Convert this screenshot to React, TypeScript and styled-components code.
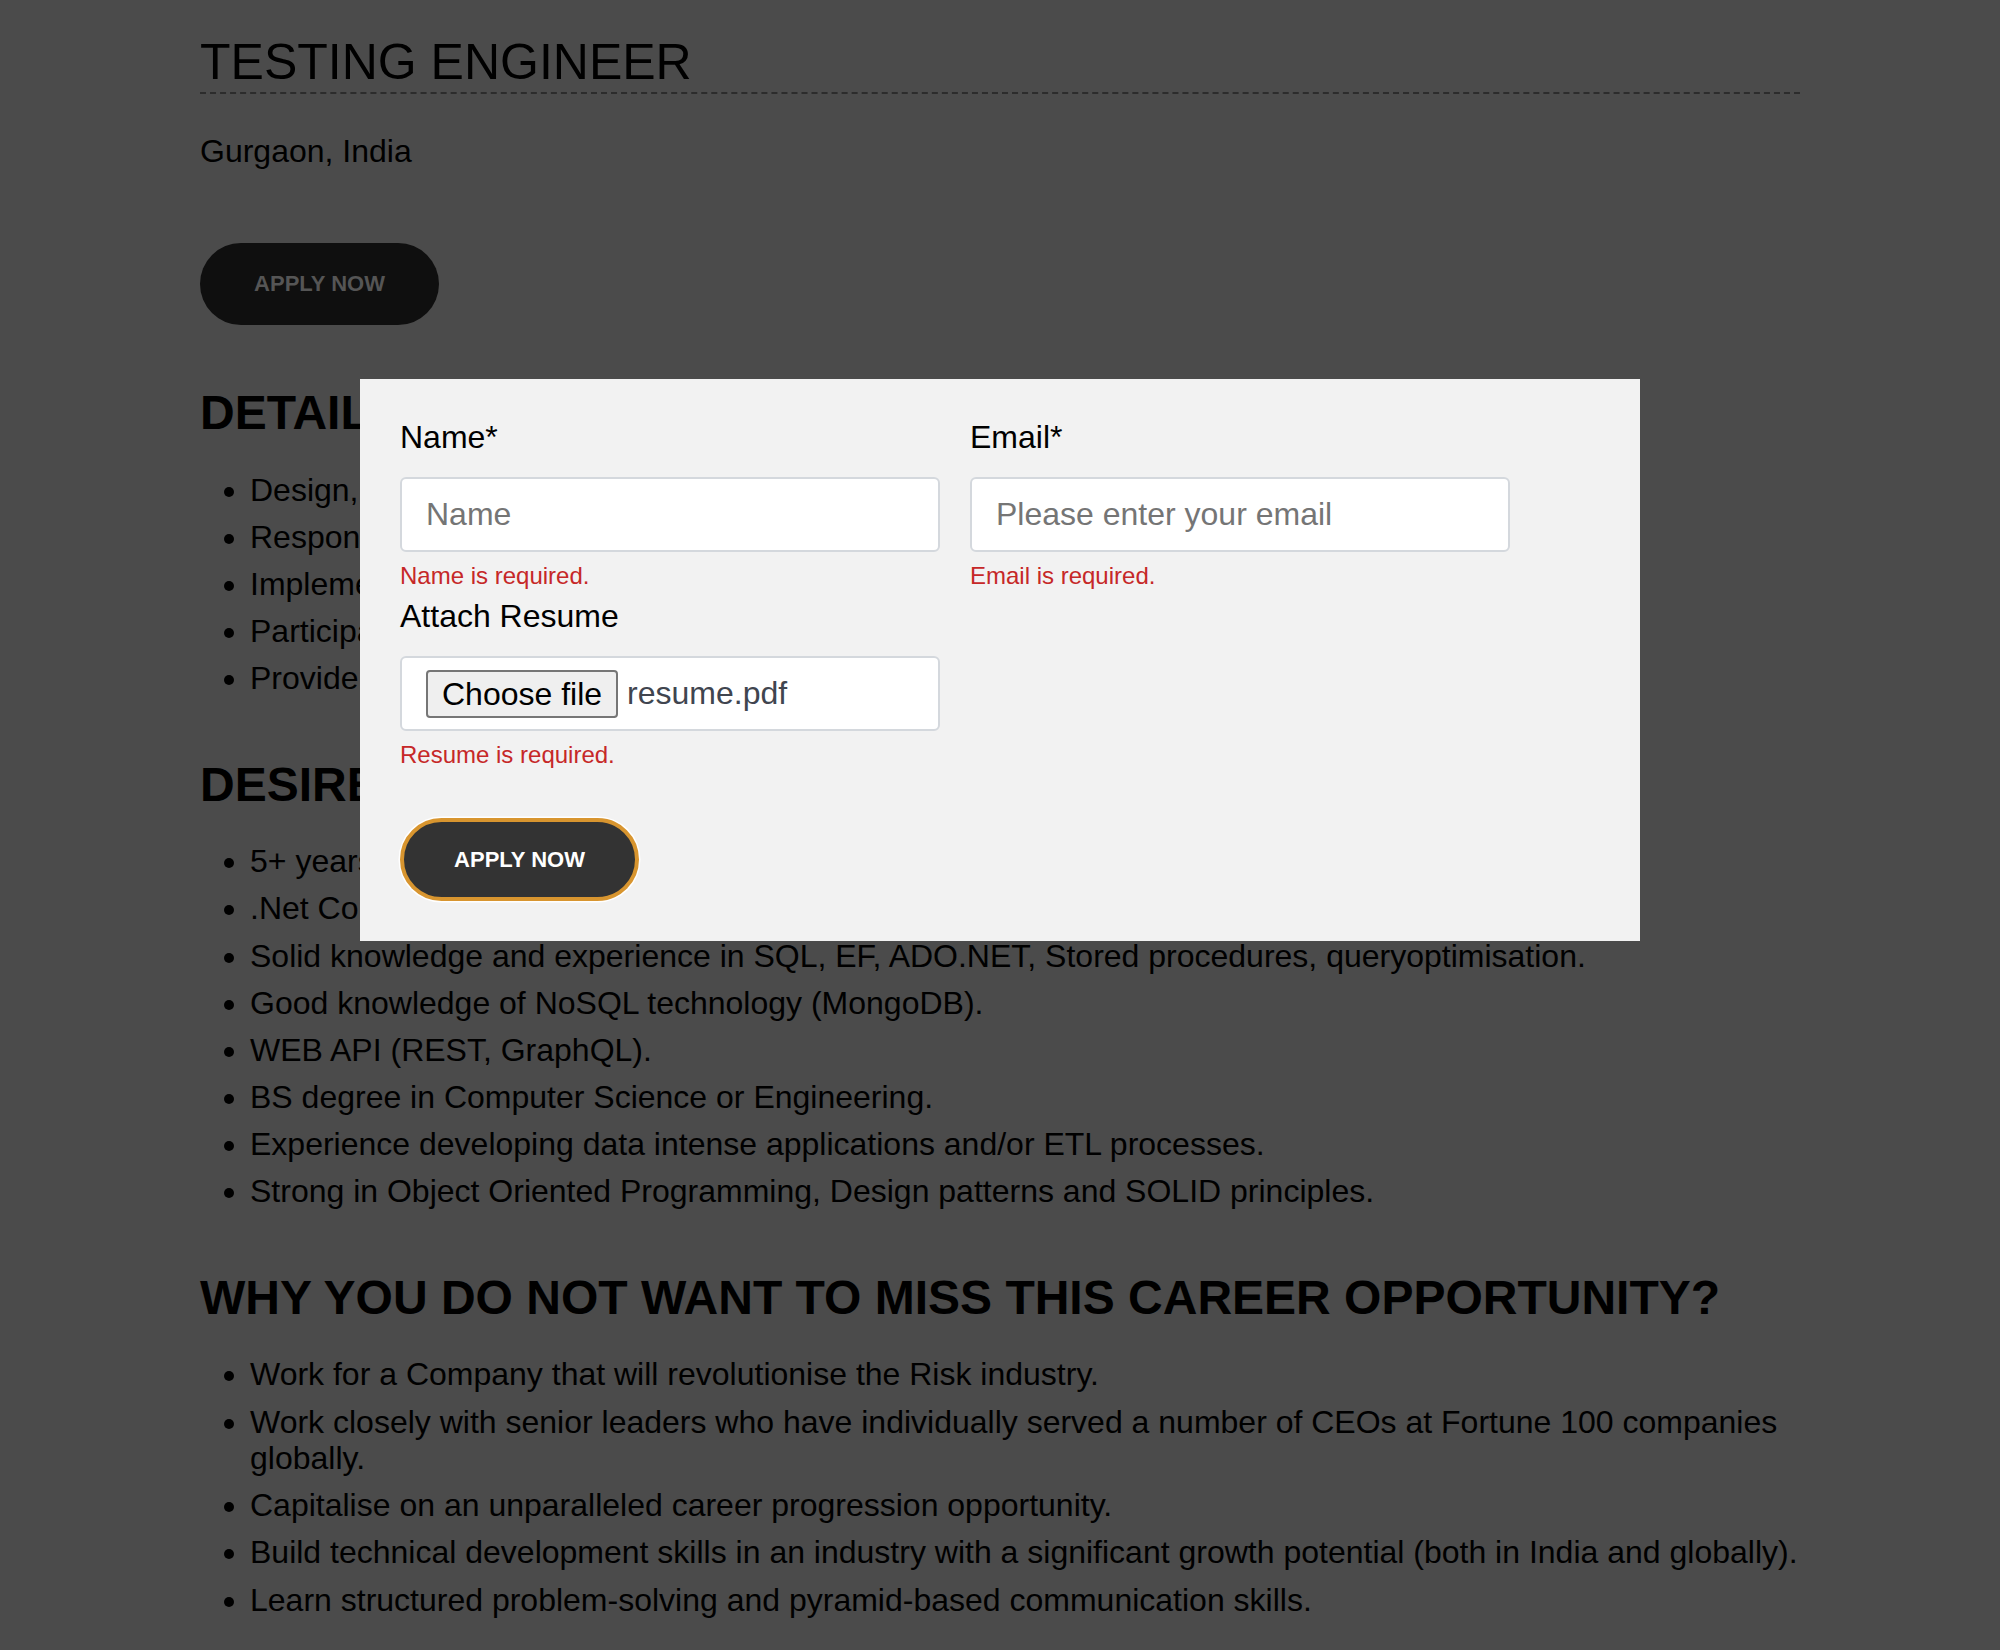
import { createGlobalStyle } from "styled-components";
import styled from "styled-components";

const GlobalStyle = createGlobalStyle`
  html, body {
    margin: 0;
    padding: 0;
    background: #4b4b4b;
  }
  body {
    font-family: "Liberation Sans", Arial, Helvetica, sans-serif;
    color: #000;
  }
  * {
    box-sizing: border-box;
  }
`;

const details = [
  "Design, develop and execute automation scripts using open source tools.",
  "Responsible for identifying, recording and tracking bugs.",
  "Implement test plans and test cases for new features.",
  "Participate in code reviews and sprint planning meetings.",
  "Provide regular reports on testing progress and quality.",
];

const desired = [
  "5+ years of experience in software development and testing.",
  ".Net Core, C#, ASP.NET MVC and Entity Framework.",
  "Solid knowledge and experience in SQL, EF, ADO.NET, Stored procedures, queryoptimisation.",
  "Good knowledge of NoSQL technology (MongoDB).",
  "WEB API (REST, GraphQL).",
  "BS degree in Computer Science or Engineering.",
  "Experience developing data intense applications and/or ETL processes.",
  "Strong in Object Oriented Programming, Design patterns and SOLID principles.",
];

const why = [
  "Work for a Company that will revolutionise the Risk industry.",
  "Work closely with senior leaders who have individually served a number of CEOs at Fortune 100 companies globally.",
  "Capitalise on an unparalleled career progression opportunity.",
  "Build technical development skills in an industry with a significant growth potential (both in India and globally).",
  "Learn structured problem-solving and pyramid-based communication skills.",
];

const Page = styled.div`
  width: 1600px;
  margin: 0 auto;
  padding-top: 32px;
  padding-bottom: 40px;
`;

const JobTitle = styled.h1`
  margin: 0;
  font-size: 50px;
  font-weight: 400;
  line-height: 60px;
  border-bottom: 2px dashed #2c2c2c;
`;

const Location = styled.p`
  margin: 33px 0 0;
  font-size: 32px;
  line-height: 48px;
`;

const ApplyWrap = styled.div`
  margin-top: 68px;
`;

const ApplyButton = styled.button<{ $active?: boolean }>`
  width: 239px;
  height: ${(p) => (p.$active ? "83px" : "82px")};
  border-radius: 42px;
  border: ${(p) => (p.$active ? "4px solid #d8952f" : "none")};
  box-shadow: ${(p) => (p.$active ? "0 0 0 1.5px #ffffff" : "none")};
  background: ${(p) => (p.$active ? "#333333" : "#0f0f0f")};
  color: ${(p) => (p.$active ? "#ffffff" : "#555555")};
  font-family: "Liberation Sans", Arial, Helvetica, sans-serif;
  font-size: 22px;
  font-weight: 700;
  cursor: pointer;
  padding: 0;
`;

const SectionTitle = styled.h2`
  margin: 59px 0 0;
  font-size: 48px;
  font-weight: 700;
  line-height: 57.6px;
`;

const List = styled.ul`
  margin: 30px -20px 0 0;
  padding-left: 50px;
`;

const Item = styled.li`
  font-size: 32px;
  line-height: 36.8px;
  margin-bottom: 10.3px;
`;

const Modal = styled.div`
  position: fixed;
  top: 379px;
  left: 50%;
  transform: translateX(-50%);
  width: 1280px;
  padding: 40px;
  background: #f2f2f2;
`;

const FormGrid = styled.div`
  display: grid;
  grid-template-columns: 540px 540px;
  column-gap: 30px;
  row-gap: 9px;
`;

const Field = styled.div`
  display: flex;
  flex-direction: column;
`;

const Label = styled.label`
  font-size: 32px;
  line-height: 36px;
  margin-bottom: 22px;
  color: #000;
`;

const TextInput = styled.input`
  height: 75px;
  border: 2px solid #d4d8dd;
  border-radius: 6px;
  background: #fff;
  padding: 0 24px;
  font-family: "Liberation Sans", Arial, Helvetica, sans-serif;
  font-size: 32px;
  color: #000;
  outline: none;
  &::placeholder {
    color: #757575;
  }
`;

const FileBox = styled.div`
  height: 75px;
  border: 2px solid #d4d8dd;
  border-radius: 6px;
  background: #fff;
  padding: 0 24px;
  display: flex;
  align-items: center;
  gap: 9px;
`;

const ChooseButton = styled.button`
  height: 48px;
  padding: 0 14px;
  border: 2px solid #767676;
  border-radius: 4px;
  background: #efefef;
  font-family: "Liberation Sans", Arial, Helvetica, sans-serif;
  font-size: 32px;
  color: #000;
  line-height: 1;
`;

const FileName = styled.span`
  font-size: 32px;
  color: #40454f;
`;

const Error = styled.div`
  margin-top: 10px;
  font-size: 24px;
  line-height: 27px;
  color: #c62828;
`;

const SubmitWrap = styled.div`
  margin-top: 50px;
`;

export default function App() {
  return (
    <>
      <GlobalStyle />
      <Page>
        <JobTitle>TESTING ENGINEER</JobTitle>
        <Location>Gurgaon, India</Location>
        <ApplyWrap>
          <ApplyButton>APPLY NOW</ApplyButton>
        </ApplyWrap>

        <SectionTitle>DETAILS</SectionTitle>
        <List>
          {details.map((d) => (
            <Item key={d}>{d}</Item>
          ))}
        </List>

        <SectionTitle>DESIRED SKILLS</SectionTitle>
        <List>
          {desired.map((d) => (
            <Item key={d}>{d}</Item>
          ))}
        </List>

        <SectionTitle>WHY YOU DO NOT WANT TO MISS THIS CAREER OPPORTUNITY?</SectionTitle>
        <List>
          {why.map((d) => (
            <Item key={d}>{d}</Item>
          ))}
        </List>
      </Page>

      <Modal>
        <FormGrid>
          <Field>
            <Label>Name*</Label>
            <TextInput placeholder="Name" />
            <Error>Name is required.</Error>
          </Field>
          <Field>
            <Label>Email*</Label>
            <TextInput placeholder="Please enter your email" />
            <Error>Email is required.</Error>
          </Field>
          <Field>
            <Label>Attach Resume</Label>
            <FileBox>
              <ChooseButton type="button">Choose file</ChooseButton>
              <FileName>resume.pdf</FileName>
            </FileBox>
            <Error>Resume is required.</Error>
          </Field>
        </FormGrid>
        <SubmitWrap>
          <ApplyButton $active>APPLY NOW</ApplyButton>
        </SubmitWrap>
      </Modal>
    </>
  );
}
